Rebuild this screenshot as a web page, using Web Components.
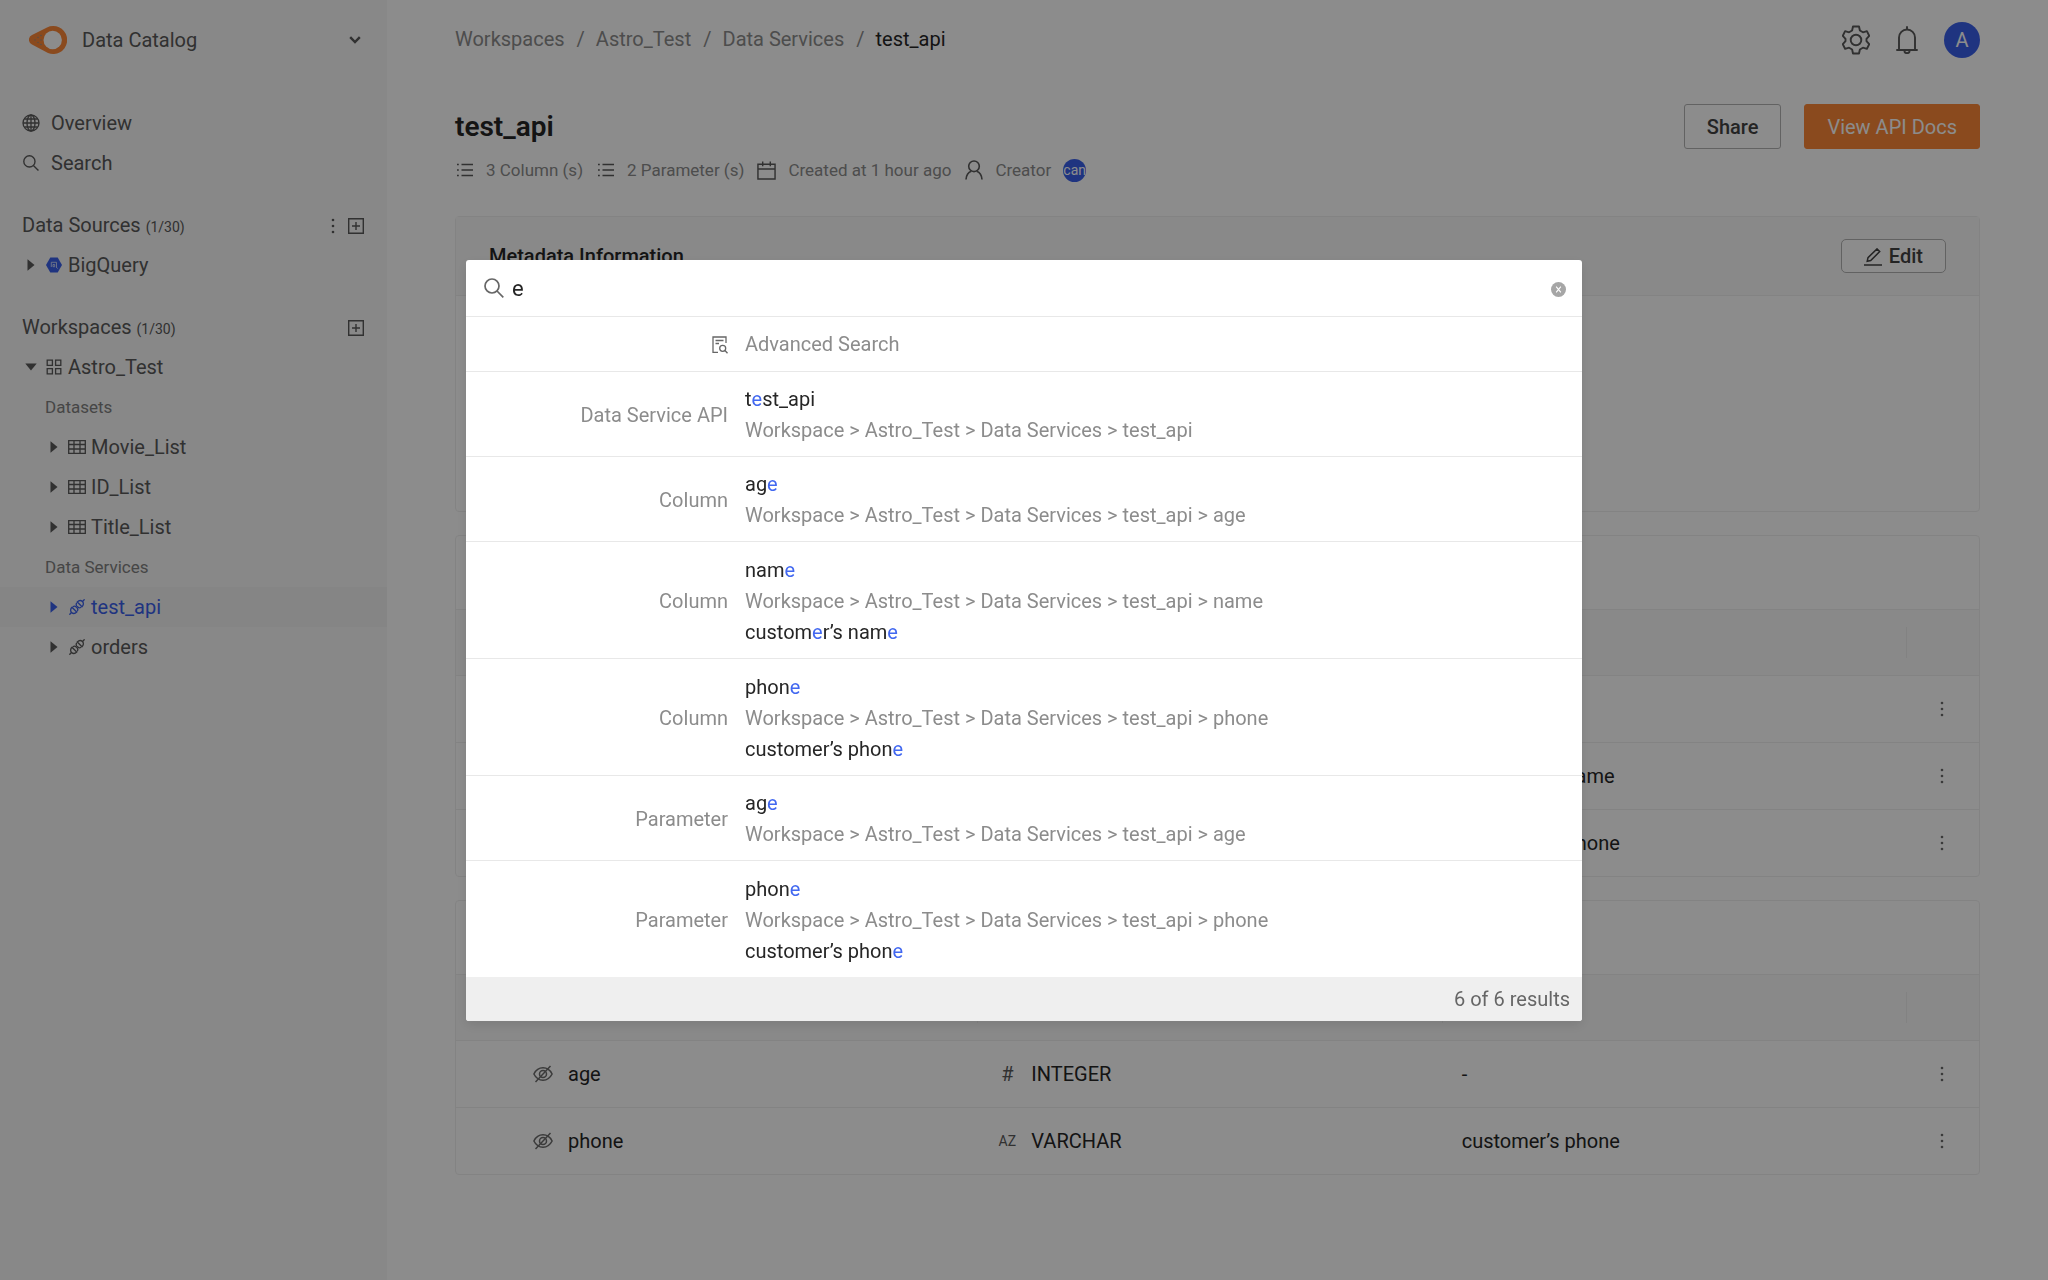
<!DOCTYPE html>
<html lang="en">
<head>
<meta charset="UTF-8">
<meta name="viewport" content="width=device-width, initial-scale=1">
<title>Data Catalog</title>
<style>
  :root {
    --color-text: #262626;
    --color-text-secondary: #595959;
    --color-text-muted: #8c8c8c;
    --color-border: #efefef;
    --color-header-bg: #f9f9f9;
    --color-primary: #3a60ea;
    --color-accent: #fb8737;
  }
  body {
    margin: 0;
    background: #fff;
    color: var(--color-text);
    font-family: Roboto, "Liberation Sans", sans-serif;
    font-size: 20px;
    line-height: 31px;
  }
</style>
</head>
<body>
<catalog-app></catalog-app>

<script>
// --- Icons ---
const ICONS = {
  logo: ['0 0 38 28', `
    <path d="M24 0a14 14 0 1 1-5 27L3 18.500a5.200 5.200 0 0 1 0-9.500L18 1.400A14 14 0 0 1 24 0z" fill="#fb8737"/>
    <circle cx="23.700" cy="14" r="9.200" fill="#fff"/>
    <g fill="#8f8f8f"><circle cx="6" cy="14" r=".7"/><circle cx="9" cy="11.500" r=".7"/><circle cx="9" cy="16.500" r=".7"/><circle cx="12" cy="14" r=".7"/><circle cx="12" cy="9.500" r=".7"/><circle cx="12" cy="18.500" r=".7"/></g>`],
  chevron: ['0 0 12 8', '<path d="M1.200 1.200 6 6l4.800-4.800" fill="none" stroke="currentColor" stroke-width="2.400"/>'],
  globe: ['0 0 18 18', '<g fill="none" stroke="currentColor" stroke-width="1.300"><circle cx="9" cy="9" r="8"/><ellipse cx="9" cy="9" rx="4" ry="8"/><path d="M9 1v16M1 9h16M2.300 5h13.400M2.300 13h13.400"/></g>'],
  search: ['0 0 20 20', '<g fill="none" stroke="currentColor" stroke-width="1.700"><circle cx="8" cy="8" r="7"/><path d="m13 13 6.300 6.300"/></g>'],
  more: ['0 0 4 16', '<g fill="currentColor"><circle cx="2" cy="2" r="1.300"/><circle cx="2" cy="8" r="1.300"/><circle cx="2" cy="14" r="1.300"/></g>'],
  plus: ['0 0 16 16', '<path d="M.7.7h14.600v14.600H.7zM8 4v8M4 8h8" fill="none" stroke="currentColor" stroke-width="1.400"/>'],
  right: ['0 0 8 12', '<path d="M.5.3 7.500 6 .5 11.700z" fill="currentColor"/>'],
  down: ['0 0 12 8', '<path d="M.3.5h11.400L6 7.500z" fill="currentColor"/>'],
  bigquery: ['0 0 16 16', '<path d="M4.300.5h7.400L16 8l-4.300 7.500H4.300L0 8z" fill="#3a60ea"/><path d="M5.300 10V5.300h5.200v4.700M7 9.700h1.700V7.500H7zM10 10l1.700 1.500" fill="none" stroke="#cdd6f8" stroke-width=".9"/>'],
  workspace: ['0 0 16 16', '<path d="M1.200 1.200h5.200v5.200H1.200zM9.600 1.200h5.200v5.200H9.600zM1.200 9.600h5.200v5.200H1.200zM9.600 9.600h5.200v5.200H9.600z" fill="none" stroke="currentColor" stroke-width="1.300"/>'],
  grid: ['0 0 18 14', '<path d="M.7.7h16.600v12.600H.7zM.7 4.500h16.600M.7 9h16.600M6 .7v12.600M12 .7v12.600" fill="none" stroke="currentColor" stroke-width="1.300"/>'],
  api: ['0 0 16 16', '<g fill="none" stroke="currentColor" stroke-width="1.300" stroke-linecap="round"><path d="M.8 15.200l1.700-1.700M15.200.8l-1.700 1.700"/><path d="M3 8.300l4.700 4.700c-1.400 1.500-3.700 1.800-5.200.5-1.400-1.500-1-3.800.5-5.200zM4.300 7.500c.9-.5 2-.3 2.800.4l1 1c.7.8.9 1.900.4 2.800"/><path d="M13 7.700 8.300 3c1.400-1.500 3.700-1.800 5.200-.5 1.400 1.500 1 3.800-.5 5.200zM11.700 8.500c-.9.500-2 .3-2.800-.4l-1-1c-.7-.8-.9-1.900-.4-2.800"/></g>'],
  gear: ['0 0 28 30', '<g fill="none" stroke="currentColor" stroke-width="1.900" stroke-linejoin="round"><path d="M11 1.500h6l.9 4 3 1.800 4-1.200 2.300 4.700-2.700 3v2.400l2.700 3-2.300 4.700-4-1.200-3 1.800-.9 4h-6l-.9-4-3-1.800-4 1.200L.8 19.200l2.700-3v-2.400l-2.700-3 2.300-4.700 4 1.200 3-1.800z"/><circle cx="14" cy="15" r="5.300"/></g>'],
  bell: ['0 0 22 28', '<g fill="none" stroke="currentColor" stroke-width="1.900" stroke-linecap="round"><path d="M1 24h20M3 24V11.500a8 8 0 0 1 16 0V24M11 3V1M8.300 24.500a2.700 2.700 0 0 0 5.400 0"/></g>'],
  list: ['0 0 16 14', '<path d="M4.500 1.500H16M4.500 7H16M4.500 12.500H16M0 1.500h1.800M0 7h1.800M0 12.500h1.800" stroke="currentColor" stroke-width="1.500"/>'],
  calendar: ['0 0 20 20', '<path d="M1 3.500h18V19H1zM1 8.500h18M6 .5v5M14 .5v5" fill="none" stroke="currentColor" stroke-width="1.500"/>'],
  person: ['0 0 18 20', '<g fill="none" stroke="currentColor" stroke-width="1.600"><circle cx="9" cy="6.300" r="5.300"/><path d="M1 19.500c.3-4.700 2.300-7.200 5.300-8.300M17 19.500c-.3-4.700-2.300-7.200-5.300-8.300"/></g>'],
  edit: ['0 0 18 18', '<path d="M0 17h18M3.200 13.300l.8-3.700L13 .9l2.700 2.700-9 9z" fill="none" stroke="currentColor" stroke-width="1.500"/>'],
  hidden: ['0 0 20 18', '<g fill="none" stroke="currentColor" stroke-width="1.500"><path d="M.9 9C5 .8 15 .8 19.100 9 15 17.200 5 17.200.9 9z"/><circle cx="10" cy="9" r="3.500"/><path d="M2.500 17 17.500 1"/></g>'],
  advanced: ['0 0 16 18', '<g fill="none" stroke="currentColor" stroke-width="1.300"><path d="M6 16.300H1V1h13v6M3.500 4.500h8M3.500 7.500H7"/><circle cx="10.700" cy="12.300" r="3"/><path d="m13 14.500 2.500 2.700"/></g>'],
  clear: ['0 0 16 16', '<circle cx="8" cy="8" r="8" fill="#a6a6a6"/><path d="m5.500 5 5 6m0-6-5 6" stroke="#fff" stroke-width="1.200"/>'],
};

class AppIcon extends HTMLElement {
  connectedCallback() {
    if (this.shadowRoot) return;
    const [viewBox, body] = ICONS[this.getAttribute('name')];
    const [, , w, h] = viewBox.split(' ');
    const width = this.getAttribute('width') || w;
    this.attachShadow({ mode: 'open' }).innerHTML = `
      <style>
        :host { display: inline-flex; flex: none; }
        svg { display: block; width: ${width}px; height: auto; }
      </style>
      <svg viewBox="0 0 ${w} ${h}" aria-hidden="true">${body}</svg>
    `;
  }
}
customElements.define('app-icon', AppIcon);


// --- Sidebar ---
class TreeItem extends HTMLElement {
  connectedCallback() {
    const level = Number(this.getAttribute('level') || 0);
    const arrow = this.getAttribute('arrow');
    const icon = this.getAttribute('icon');
    this.attachShadow({ mode: 'open' }).innerHTML = `
      <style>
        :host { display: block; }
        :host([active]) { background: #f2f2f2; color: var(--color-primary); }
        a {
          display: flex;
          align-items: center;
          height: 40px;
          padding-left: ${23 + level * 23}px;
          color: inherit;
          text-decoration: none;
        }
        .arrow { display: flex; justify-content: center; width: 16px; }
        .icon { display: flex; justify-content: center; width: 18px; margin: 0 5px 0 6px; }
      </style>
      <a href="#">
        <span class="arrow"><app-icon name="${arrow}"></app-icon></span>
        <span class="icon"><app-icon name="${icon}"></app-icon></span>
        <slot></slot>
      </a>
    `;
  }
}
customElements.define('tree-item', TreeItem);

class NavSection extends HTMLElement {
  connectedCallback() {
    this.attachShadow({ mode: 'open' }).innerHTML = `
      <style>
        :host { display: block; margin-top: 22px; }
        header {
          display: flex;
          align-items: center;
          box-sizing: border-box;
          height: 40px;
          padding: 2px 23px 0 22px;
        }
        h2 { flex: 1; margin: 0; font-size: 20px; font-weight: 400; }
        small { font-size: 14px; }
        .actions { display: flex; align-items: center; gap: 13px; }
        button { display: flex; padding: 0; border: 0; background: none; color: inherit; }
      </style>
      <header>
        <h2>${this.getAttribute('heading')} <small>(${this.getAttribute('count')})</small></h2>
        <div class="actions">
          ${this.hasAttribute('menu') ? '<button aria-label="More"><app-icon name="more"></app-icon></button>' : ''}
          <button aria-label="Add"><app-icon name="plus"></app-icon></button>
        </div>
      </header>
      <slot></slot>
    `;
  }
}
customElements.define('nav-section', NavSection);

class SideBar extends HTMLElement {
  connectedCallback() {
    this.attachShadow({ mode: 'open' }).innerHTML = `
      <style>
        :host {
          display: block;
          box-sizing: border-box;
          background: #f7f7f7;
          color: var(--color-text-secondary);
        }
        .product {
          display: flex;
          align-items: center;
          gap: 15px;
          width: 100%;
          height: 80px;
          padding: 0 26px 0 29px;
          border: 0;
          background: none;
          color: inherit;
          font: inherit;
          text-align: left;
        }
        .product span { flex: 1; }
        nav { padding-top: 23px; }
        .link {
          display: flex;
          align-items: center;
          gap: 11px;
          height: 40px;
          padding-left: 21px;
          color: inherit;
          text-decoration: none;
        }
        .slot { display: flex; justify-content: center; width: 19px; }
        h3 {
          margin: 0;
          padding-left: 45px;
          font-size: 17px;
          font-weight: 400;
          line-height: 40px;
          color: #808080;
        }
      </style>
      <button class="product">
        <app-icon name="logo"></app-icon><span>Data Catalog</span><app-icon name="chevron"></app-icon>
      </button>
      <nav>
        <a class="link" href="#"><div class="slot"><app-icon name="globe"></app-icon></div>Overview</a>
        <a class="link" href="#"><div class="slot"><app-icon name="search" width="16"></app-icon></div>Search</a>
        <nav-section heading="Data Sources" count="1/30" menu>
          <tree-item arrow="right" icon="bigquery">BigQuery</tree-item>
        </nav-section>
        <nav-section heading="Workspaces" count="1/30">
          <tree-item arrow="down" icon="workspace">Astro_Test</tree-item>
          <h3>Datasets</h3>
          <tree-item level="1" arrow="right" icon="grid">Movie_List</tree-item>
          <tree-item level="1" arrow="right" icon="grid">ID_List</tree-item>
          <tree-item level="1" arrow="right" icon="grid">Title_List</tree-item>
          <h3>Data Services</h3>
          <tree-item level="1" arrow="right" icon="api" active>test_api</tree-item>
          <tree-item level="1" arrow="right" icon="api">orders</tree-item>
        </nav-section>
      </nav>
    `;
  }
}
customElements.define('side-bar', SideBar);


// --- Buttons ---
class AppButton extends HTMLElement {
  connectedCallback() {
    this.attachShadow({ mode: 'open' }).innerHTML = `
      <style>
        :host { display: inline-flex; }
        button {
          display: flex;
          align-items: center;
          gap: 7px;
          height: 45px;
          padding: 1px 22px 0;
          border: 1px solid #b3b3b3;
          border-radius: 3px;
          background: #fff;
          color: #434343;
          font: inherit;
          font-weight: 500;
          white-space: nowrap;
        }
        :host([kind="primary"]) button {
          border-color: var(--color-accent);
          background: var(--color-accent);
          color: #fff;
          font-weight: 400;
        }
        :host([size="small"]) button { height: 34px; border-radius: 5px; }
      </style>
      <button><slot></slot></button>
    `;
  }
}
customElements.define('app-button', AppButton);


// --- Page header ---
class TopBar extends HTMLElement {
  connectedCallback() {
    this.attachShadow({ mode: 'open' }).innerHTML = `
      <style>
        :host { display: flex; align-items: center; height: 80px; }
        ol { display: flex; flex: 1; margin: 0; padding: 0 0 2px; list-style: none; }
        li + li::before { content: "/"; margin: 0 11px 0 12px; color: var(--color-text-muted); }
        a { color: var(--color-text-muted); text-decoration: none; }
        a[aria-current] { color: var(--color-text); }
        .tools { display: flex; align-items: center; gap: 26px; color: var(--color-text-secondary); }
        button { display: flex; padding: 0; border: 0; background: none; color: inherit; font: inherit; }
        .avatar {
          align-items: center;
          justify-content: center;
          width: 36px;
          height: 36px;
          border-radius: 50%;
          background: var(--color-primary);
          color: #fff;
        }
      </style>
      <ol aria-label="Breadcrumb">
        <li><a href="#">Workspaces</a></li>
        <li><a href="#">Astro_Test</a></li>
        <li><a href="#">Data Services</a></li>
        <li><a href="#" aria-current="page">test_api</a></li>
      </ol>
      <div class="tools">
        <button aria-label="Settings"><app-icon name="gear"></app-icon></button>
        <button aria-label="Notifications"><app-icon name="bell"></app-icon></button>
        <button class="avatar">A</button>
      </div>
    `;
  }
}
customElements.define('top-bar', TopBar);

class PageTitle extends HTMLElement {
  connectedCallback() {
    this.attachShadow({ mode: 'open' }).innerHTML = `
      <style>
        :host { display: block; padding-top: 24px; }
        .row { display: flex; align-items: center; gap: 23px; }
        h1 { flex: 1; margin: 0; font-size: 28px; font-weight: 600; line-height: 45px; }
        ul {
          display: flex;
          align-items: center;
          gap: 13px;
          margin: 5px 0 0;
          padding: 0;
          list-style: none;
          font-size: 17px;
          color: var(--color-text-muted);
        }
        li { display: flex; align-items: center; gap: 12px; height: 32px; white-space: nowrap; }
        app-icon { justify-content: center; width: 19px; color: var(--color-text-secondary); }
        .creator {
          display: flex;
          justify-content: center;
          width: 23px;
          height: 23px;
          overflow: hidden;
          border-radius: 50%;
          background: var(--color-primary);
          color: #fff;
          font-size: 14px;
          line-height: 23px;
        }
      </style>
      <div class="row">
        <h1>test_api</h1>
        <app-button>Share</app-button>
        <app-button kind="primary">View API Docs</app-button>
      </div>
      <ul>
        <li><app-icon name="list"></app-icon>3 Column (s)</li>
        <li><app-icon name="list"></app-icon>2 Parameter (s)</li>
        <li><app-icon name="calendar" width="19"></app-icon>Created at 1 hour ago</li>
        <li><app-icon name="person"></app-icon>Creator<span class="creator">can</span></li>
      </ul>
    `;
  }
}
customElements.define('page-title', PageTitle);


// --- Cards ---
class DataCard extends HTMLElement {
  connectedCallback() {
    const heading = this.getAttribute('heading');
    this.attachShadow({ mode: 'open' }).innerHTML = `
      <style>
        :host {
          display: block;
          border: 1px solid var(--color-border);
          border-radius: 4px;
        }
        header {
          display: flex;
          align-items: center;
          justify-content: space-between;
          box-sizing: border-box;
          height: 74px;
          padding: 0 33px;
          border-bottom: 1px solid var(--color-border);
        }
        :host([filled]) header { height: 79px; background: var(--color-header-bg); }
        h2 { margin: 0; font-size: 20px; font-weight: 500; }
      </style>
      <header>
        ${heading ? `<h2>${heading}</h2>` : ''}
        <slot name="action"></slot>
      </header>
      <slot></slot>
    `;
  }
}
customElements.define('data-card', DataCard);

class FieldTable extends HTMLElement {
  connectedCallback() {
    const rows = JSON.parse(this.getAttribute('rows'));
    const nameCell = name => name
      ? `<div class="cell"><app-icon name="hidden"></app-icon>${name}</div>` : '';
    const typeCell = type => type
      ? `<div class="cell type"><span class="kind ${type === 'INTEGER' ? '' : 'az'}">${type === 'INTEGER' ? '#' : 'AZ'}</span>${type}</div>` : '';
    this.attachShadow({ mode: 'open' }).innerHTML = `
      <style>
        :host { display: block; }
        table { width: 100%; border-spacing: 0; table-layout: fixed; }
        th, td { padding: 0 0 0 19px; text-align: left; font-weight: 400; }
        th { height: 65px; background: var(--color-header-bg); border-bottom: 1px solid var(--color-border); }
        td { height: 66px; border-bottom: 1px solid var(--color-border); }
        tr:last-child td { border-bottom: 0; }
        .lead { width: 58px; padding: 0; }
        .menu { width: 69px; padding: 0 3px 0 0; }
        th:not(.lead):not(.menu) {
          background-image: linear-gradient(#ededed, #ededed);
          background-position: right center;
          background-size: 1px 31px;
          background-repeat: no-repeat;
        }
        .cell { display: flex; align-items: center; gap: 15px; }
        app-icon { color: #6b6b6b; }
        .kind { width: 20px; text-align: center; color: var(--color-text-secondary); }
        .kind.az { font-size: 14px; }
        .type { gap: 14px; }
        button { display: flex; margin: 0 auto; padding: 0; border: 0; background: none; }
      </style>
      <table>
        <thead>
          <tr>
            <th class="lead"></th>
            <th aria-label="Name"></th>
            <th aria-label="Type"></th>
            <th aria-label="Description"></th>
            <th class="menu"></th>
          </tr>
        </thead>
        <tbody>
          ${rows.map(([name, type, description]) => `
            <tr>
              <td class="lead"></td>
              <td>${nameCell(name)}</td>
              <td>${typeCell(type)}</td>
              <td>${description}</td>
              <td class="menu"><button aria-label="Row menu"><app-icon name="more"></app-icon></button></td>
            </tr>`).join('')}
        </tbody>
      </table>
    `;
  }
}
customElements.define('field-table', FieldTable);


// --- Search dialog ---
// Matched characters are wrapped in [ ].
const RESULTS = [
  { kind: 'Data Service API', name: 't[e]st_api', path: 'test_api' },
  { kind: 'Column', name: 'ag[e]', path: 'test_api > age' },
  { kind: 'Column', name: 'nam[e]', path: 'test_api > name', note: 'custom[e]r’s nam[e]' },
  { kind: 'Column', name: 'phon[e]', path: 'test_api > phone', note: 'customer’s phon[e]' },
  { kind: 'Parameter', name: 'ag[e]', path: 'test_api > age' },
  { kind: 'Parameter', name: 'phon[e]', path: 'test_api > phone', note: 'customer’s phon[e]' },
];

const highlight = text => text.replace(/\[(.+?)\]/g, '<mark>$1</mark>');

class SearchResult extends HTMLElement {
  set result({ kind, name, path, note }) {
    const crumbs = `Workspace > Astro_Test > Data Services > ${path}`.replace(/>/g, '&gt;');
    this.attachShadow({ mode: 'open' }).innerHTML = `
      <style>
        :host { display: block; border-bottom: 1px solid #e8e8e8; }
        :host(:last-child) { border-bottom: 0; }
        a {
          display: grid;
          grid-template-columns: 262px 1fr;
          column-gap: 17px;
          align-items: center;
          padding: 12px 0 10px;
          color: var(--color-text);
          text-decoration: none;
        }
        a.long { padding-top: 13px; }
        .kind { text-align: right; color: var(--color-text-muted); }
        .text > span { display: block; }
        .text .path { color: var(--color-text-muted); }
        mark { background: none; color: #4268f0; }
      </style>
      <a href="#" class="${note ? 'long' : ''}">
        <span class="kind">${kind}</span>
        <span class="text">
          <span>${highlight(name)}</span>
          <span class="path">${crumbs}</span>
          ${note ? `<span>${highlight(note)}</span>` : ''}
        </span>
      </a>
    `;
  }
}
customElements.define('search-result', SearchResult);

class SearchDialog extends HTMLElement {
  connectedCallback() {
    this.attachShadow({ mode: 'open' }).innerHTML = `
      <style>
        :host {
          position: fixed;
          inset: 0;
          display: flex;
          align-items: flex-start;
          justify-content: center;
          padding: 260px 24px 0;
          background: rgba(0, 0, 0, 0.45);
        }
        .dialog {
          width: 100%;
          max-width: 1116px;
          overflow: hidden;
          border-radius: 3px;
          background: #fff;
          box-shadow: 0 4px 12px rgba(0, 0, 0, 0.1);
        }
        .search {
          display: flex;
          align-items: center;
          gap: 8px;
          height: 56px;
          padding: 0 16px 0 18px;
          border-bottom: 1px solid #e8e8e8;
          color: #666;
        }
        input {
          flex: 1;
          min-width: 0;
          padding: 0;
          border: 0;
          outline: 0;
          background: none;
          color: var(--color-text);
          font: inherit;
          font-size: 22px;
        }
        button { display: flex; padding: 0; border: 0; background: none; color: inherit; font: inherit; }
        .clear { padding-top: 3px; }
        .advanced {
          display: grid;
          grid-template-columns: 262px 1fr;
          column-gap: 17px;
          align-items: center;
          width: 100%;
          height: 55px;
          padding-top: 1px;
          border-bottom: 1px solid #e8e8e8;
          color: var(--color-text-muted);
          text-align: left;
        }
        .advanced app-icon { justify-self: end; color: #666; }
        footer {
          padding: 7px 12px 6px;
          background: #efefef;
          color: #666;
          text-align: right;
        }
      </style>
      <div class="dialog" role="dialog" aria-label="Search">
        <label class="search">
          <app-icon name="search"></app-icon>
          <input type="text" value="e" aria-label="Search">
          <button class="clear" aria-label="Clear"><app-icon name="clear" width="15"></app-icon></button>
        </label>
        <button class="advanced"><app-icon name="advanced"></app-icon>Advanced Search</button>
        <div class="results"></div>
        <footer>6 of 6 results</footer>
      </div>
    `;
    const list = this.shadowRoot.querySelector('.results');
    RESULTS.forEach(result => {
      const item = document.createElement('search-result');
      item.result = result;
      list.appendChild(item);
    });
  }
}
customElements.define('search-dialog', SearchDialog);


// --- App ---
const columnRows = [['', '', ''], ['', '', 'customer’s name'], ['', '', 'customer’s phone']];
const parameterRows = [['age', 'INTEGER', '-'], ['phone', 'VARCHAR', 'customer’s phone']];

class CatalogApp extends HTMLElement {
  connectedCallback() {
    this.attachShadow({ mode: 'open' }).innerHTML = `
      <style>
        :host {
          display: grid;
          grid-template-columns: 387px 1fr;
          min-height: 100vh;
        }
        main { padding: 0 68px 68px; }
        .cards { display: flex; flex-direction: column; gap: 23px; margin-top: 30px; }
        .metadata { height: 215px; }
      </style>
      <side-bar></side-bar>
      <main>
        <top-bar></top-bar>
        <page-title></page-title>
        <div class="cards">
          <data-card heading="Metadata Information" filled>
            <app-button slot="action" size="small"><app-icon name="edit"></app-icon>Edit</app-button>
            <div class="metadata"></div>
          </data-card>
          <data-card>
            <field-table rows='${JSON.stringify(columnRows)}'></field-table>
          </data-card>
          <data-card>
            <field-table rows='${JSON.stringify(parameterRows)}'></field-table>
          </data-card>
        </div>
      </main>
      <search-dialog></search-dialog>
    `;
  }
}
customElements.define('catalog-app', CatalogApp);
</script>
</body>
</html>
